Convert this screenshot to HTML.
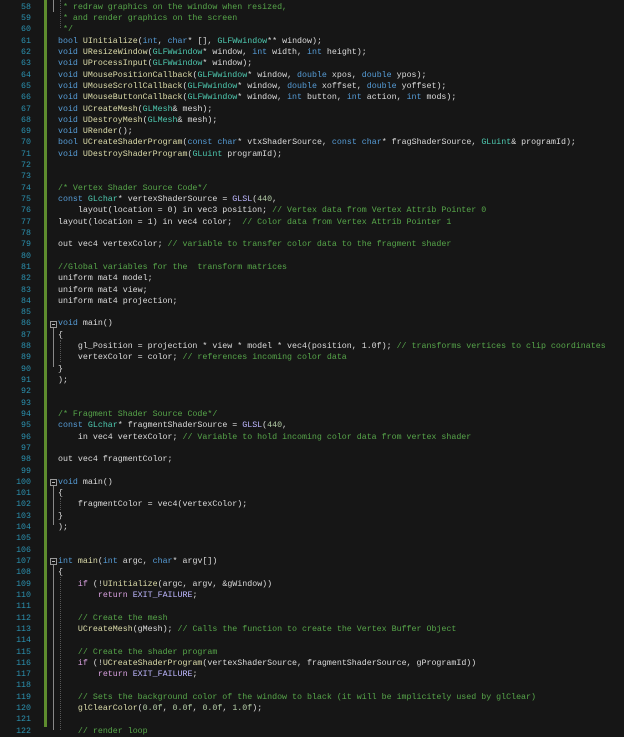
<!DOCTYPE html>
<html><head><meta charset="utf-8"><style>
html,body{margin:0;padding:0;background:#161616;width:624px;height:730px;overflow:hidden}
#ln{position:absolute;left:0;top:1.7px;width:31px;text-align:right;color:#2b91af;font:8.3px/11.32px "Liberation Mono",monospace;white-space:pre}
#code{position:absolute;left:58px;top:1.7px;color:#dcdcdc;font:8.3px/11.32px "Liberation Mono",monospace;white-space:pre}
.k{color:#569cd6}.c{color:#57a64a}.t{color:#4ec9b0}.m{color:#beb7ff}.f{color:#dcdcaa}.n{color:#b5cea8}.p{color:#d8a0df}
#bar{position:absolute;left:44px;top:0;width:3px;height:727px;background:#5e8c2e}
.box{position:absolute;left:50px;width:7px;height:7px;border:1px solid #999;box-sizing:border-box}
.box:after{content:"";position:absolute;left:1px;top:2px;width:3px;height:1px;background:#bbb}
.vl{position:absolute;left:53px;width:1px;background:#888}
.g{position:absolute;width:0;border-left:1px dotted #555}
</style></head><body>
<div id="bar"></div>
<div class="vl" style="top:0;height:12px"></div>
<div class="box" style="top:321px"></div><div class="vl" style="top:328px;height:39px"></div>
<div class="box" style="top:479px"></div><div class="vl" style="top:486px;height:39px"></div>
<div class="box" style="top:558px"></div><div class="vl" style="top:565px;height:165px"></div>
<div class="g" style="left:60px;top:0;height:28px"></div>
<div class="g" style="left:60px;top:340px;height:22px"></div>
<div class="g" style="left:60px;top:498px;height:12px"></div>
<div class="g" style="left:60px;top:577px;height:153px"></div>
<div id="ln">58
59
60
61
62
63
64
65
66
67
68
69
70
71
72
73
74
75
76
77
78
79
80
81
82
83
84
85
86
87
88
89
90
91
92
93
94
95
96
97
98
99
100
101
102
103
104
105
106
107
108
109
110
111
112
113
114
115
116
117
118
119
120
121
122</div>
<div id="code"><span class="c"> * redraw graphics on the window when resized,</span>
<span class="c"> * and render graphics on the screen</span>
<span class="c"> */</span>
<span class="k">bool</span> <span class="f">UInitialize</span>(<span class="k">int</span>, <span class="k">char</span>* [], <span class="t">GLFWwindow</span>** window);
<span class="k">void</span> <span class="f">UResizeWindow</span>(<span class="t">GLFWwindow</span>* window, <span class="k">int</span> width, <span class="k">int</span> height);
<span class="k">void</span> <span class="f">UProcessInput</span>(<span class="t">GLFWwindow</span>* window);
<span class="k">void</span> <span class="f">UMousePositionCallback</span>(<span class="t">GLFWwindow</span>* window, <span class="k">double</span> xpos, <span class="k">double</span> ypos);
<span class="k">void</span> <span class="f">UMouseScrollCallback</span>(<span class="t">GLFWwindow</span>* window, <span class="k">double</span> xoffset, <span class="k">double</span> yoffset);
<span class="k">void</span> <span class="f">UMouseButtonCallback</span>(<span class="t">GLFWwindow</span>* window, <span class="k">int</span> button, <span class="k">int</span> action, <span class="k">int</span> mods);
<span class="k">void</span> <span class="f">UCreateMesh</span>(<span class="t">GLMesh</span>&amp; mesh);
<span class="k">void</span> <span class="f">UDestroyMesh</span>(<span class="t">GLMesh</span>&amp; mesh);
<span class="k">void</span> <span class="f">URender</span>();
<span class="k">bool</span> <span class="f">UCreateShaderProgram</span>(<span class="k">const</span> <span class="k">char</span>* vtxShaderSource, <span class="k">const</span> <span class="k">char</span>* fragShaderSource, <span class="t">GLuint</span>&amp; programId);
<span class="k">void</span> <span class="f">UDestroyShaderProgram</span>(<span class="t">GLuint</span> programId);


<span class="c">/* Vertex Shader Source Code*/</span>
<span class="k">const</span> <span class="t">GLchar</span>* vertexShaderSource = <span class="m">GLSL</span>(<span class="n">440</span>,
    layout(location = 0) in vec3 position; <span class="c">// Vertex data from Vertex Attrib Pointer 0</span>
layout(location = 1) in vec4 color;  <span class="c">// Color data from Vertex Attrib Pointer 1</span>

out vec4 vertexColor; <span class="c">// variable to transfer color data to the fragment shader</span>

<span class="c">//Global variables for the  transform matrices</span>
uniform mat4 model;
uniform mat4 view;
uniform mat4 projection;

<span class="k">void</span> main()
{
    gl_Position = projection * view * model * vec4(position, 1.0f); <span class="c">// transforms vertices to clip coordinates</span>
    vertexColor = color; <span class="c">// references incoming color data</span>
}
);


<span class="c">/* Fragment Shader Source Code*/</span>
<span class="k">const</span> <span class="t">GLchar</span>* fragmentShaderSource = <span class="m">GLSL</span>(<span class="n">440</span>,
    in vec4 vertexColor; <span class="c">// Variable to hold incoming color data from vertex shader</span>

out vec4 fragmentColor;

<span class="k">void</span> main()
{
    fragmentColor = vec4(vertexColor);
}
);


<span class="k">int</span> <span class="f">main</span>(<span class="k">int</span> argc, <span class="k">char</span>* argv[])
{
    <span class="p">if</span> (!<span class="f">UInitialize</span>(argc, argv, &amp;gWindow))
        <span class="p">return</span> <span class="m">EXIT_FAILURE</span>;

    <span class="c">// Create the mesh</span>
    <span class="f">UCreateMesh</span>(gMesh); <span class="c">// Calls the function to create the Vertex Buffer Object</span>

    <span class="c">// Create the shader program</span>
    <span class="p">if</span> (!<span class="f">UCreateShaderProgram</span>(vertexShaderSource, fragmentShaderSource, gProgramId))
        <span class="p">return</span> <span class="m">EXIT_FAILURE</span>;

    <span class="c">// Sets the background color of the window to black (it will be implicitely used by glClear)</span>
    <span class="f">glClearColor</span>(<span class="n">0.0f</span>, <span class="n">0.0f</span>, <span class="n">0.0f</span>, <span class="n">1.0f</span>);

    <span class="c">// render loop</span></div>
</body></html>
